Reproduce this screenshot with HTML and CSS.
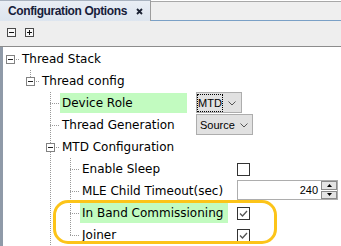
FILE: index.html
```html
<!DOCTYPE html>
<html>
<head>
<meta charset="utf-8">
<link rel="stylesheet" href="styles.css">
</head>
<body>
<div class="view">
  <div class="tabbar">
    <div class="tab">
      <span class="tab-title">Configuration Options</span>
      <svg class="tab-close" width="7" height="7" viewBox="0 0 7 7"><path d="M1 1L6 6M6 1L1 6" stroke="#1b2233" stroke-width="1.8"/></svg>
    </div>
    <div class="tab-rest"></div>
  </div>
  <div class="toolbar">
    <span class="tb-btn minus"></span>
    <span class="tb-btn plus"></span>
  </div>
  <div class="tree">
    <div class="row">
      <span class="c exp-root"><span class="box"></span></span>
      <span class="label">Thread Stack</span>
    </div>
    <div class="row">
      <span class="c"></span>
      <span class="c exp-last"><span class="box"></span></span>
      <span class="label">Thread config</span>
    </div>
    <div class="row g2">
      <div class="key">
        <span class="c"></span><span class="c"></span><span class="c tee"></span>
        <span class="label hl">Device Role</span>
      </div>
      <div class="select mtd"><span class="focus">MTD</span><svg class="chev" width="8" height="5" viewBox="0 0 8 5"><path d="M0.5 0.5L4 4L7.5 0.5" fill="none" stroke="#555" stroke-width="1"/></svg></div>
    </div>
    <div class="row g2">
      <div class="key">
        <span class="c"></span><span class="c"></span><span class="c tee"></span>
        <span class="label">Thread Generation</span>
      </div>
      <div class="select src"><span>Source</span><svg class="chev" width="8" height="5" viewBox="0 0 8 5"><path d="M0.5 0.5L4 4L7.5 0.5" fill="none" stroke="#555" stroke-width="1"/></svg></div>
    </div>
    <div class="row">
      <span class="c"></span><span class="c"></span>
      <span class="c exp-mid"><span class="box"></span></span>
      <span class="label">MTD Configuration</span>
    </div>
    <div class="row g3">
      <div class="key">
        <span class="c"></span><span class="c"></span><span class="c v"></span><span class="c tee"></span>
        <span class="label">Enable Sleep</span>
      </div>
      <span class="check"></span>
    </div>
    <div class="row g3">
      <div class="key">
        <span class="c"></span><span class="c"></span><span class="c v"></span><span class="c tee"></span>
        <span class="label">MLE Child Timeout(sec)</span>
      </div>
      <div class="spin">
        <span class="spin-val">240</span>
        <span class="spin-btns">
          <span class="spin-btn"><svg width="5" height="3" viewBox="0 0 5 3"><path d="M0 3L2.5 0L5 3Z" fill="#000"/></svg></span>
          <span class="spin-btn"><svg width="5" height="3" viewBox="0 0 5 3"><path d="M0 0L2.5 3L5 0Z" fill="#000"/></svg></span>
        </span>
      </div>
    </div>
    <div class="row g3">
      <div class="key">
        <span class="c"></span><span class="c"></span><span class="c v"></span><span class="c tee"></span>
        <span class="label hl">In Band Commissioning</span>
      </div>
      <span class="check"><svg width="11" height="11" viewBox="0 0 11 11"><path d="M2 5.5L4.5 8L9 3" fill="none" stroke="#555" stroke-width="1.3"/></svg></span>
    </div>
    <div class="row g3">
      <div class="key">
        <span class="c"></span><span class="c"></span><span class="c v"></span><span class="c end"></span>
        <span class="label">Joiner</span>
      </div>
      <span class="check"><svg width="11" height="11" viewBox="0 0 11 11"><path d="M2 5.5L4.5 8L9 3" fill="none" stroke="#555" stroke-width="1.3"/></svg></span>
    </div>
  </div>
  <div class="callout"></div>
</div>
</body>
</html>
```
FILE: styles.css
```css
html, body {
  margin: 0;
  padding: 0;
  background: #ffffff;
  overflow: hidden;
}
.view {
  position: relative;
  width: 341px;
  height: 246px;
  overflow: hidden;
  font-family: "DejaVu Sans", sans-serif;
  font-size: 12px;
  color: #000;
}
.tabbar {
  display: flex;
  height: 21px;
}
.tab {
  box-sizing: border-box;
  width: 151px;
  height: 21px;
  display: flex;
  align-items: center;
  padding-left: 8px;
  border-top: 1px solid #a9b3c0;
  border-right: 1px solid #9c9c9c;
  background: linear-gradient(#e9eef5, #dde5ef);
}
.tab-title {
  font-family: "Liberation Sans", Arial, sans-serif;
  font-weight: bold;
  font-size: 12px;
  letter-spacing: -0.4px;
  color: #17203a;
  line-height: 19px;
}
.tab-close {
  margin-left: 9px;
  margin-top: 1px;
}
.tab-rest {
  flex: 1;
  box-sizing: border-box;
  margin-top: 1px;
  height: 20px;
  background: #efefef;
  border-top: 1px solid #a8a8a8;
  border-bottom: 1px solid #7aa0c6;
}
.toolbar {
  box-sizing: border-box;
  height: 26px;
  background: #eeeeee;
  border-bottom: 1px solid #8c8c8c;
  display: flex;
  align-items: flex-start;
  gap: 9px;
  padding: 7px 0 0 7px;
}
.tb-btn {
  box-sizing: border-box;
  width: 9px;
  height: 9px;
  border: 1px solid #4a4a4a;
  background-color: #f8f8f8;
  background-repeat: no-repeat;
  background-position: center;
}
.tb-btn.minus {
  background-image: linear-gradient(#111, #111);
  background-size: 5px 1px;
}
.tb-btn.plus {
  background-image: linear-gradient(#111, #111), linear-gradient(#111, #111);
  background-size: 5px 1px, 1px 5px;
}
.tree {
  padding-top: 1px;
  height: 199px;
  background: linear-gradient(to right, #8f9aa8 0 3px, #ffffff 3px);
}
.row {
  display: flex;
  height: 22px;
}
.key {
  display: flex;
  flex: none;
  width: var(--col);
}
.row.g2 { --col: 196px; }
.row.g3 { --col: 237px; }
.c {
  flex: none;
  width: 20px;
  height: 22px;
  background-repeat: no-repeat;
}
.c.v {
  background-image: repeating-linear-gradient(to bottom, #999 0 1px, transparent 1px 2px);
  background-size: 1px 22px;
  background-position: 10px 0;
}
.c.tee, .c.exp-mid {
  background-image:
    repeating-linear-gradient(to bottom, #999 0 1px, transparent 1px 2px),
    repeating-linear-gradient(to right, #999 0 1px, transparent 1px 2px);
  background-size: 1px 22px, 10px 1px;
  background-position: 10px 0, 10px 11px;
}
.c.end, .c.exp-last {
  background-image:
    repeating-linear-gradient(to bottom, #999 0 1px, transparent 1px 2px),
    repeating-linear-gradient(to right, #999 0 1px, transparent 1px 2px);
  background-size: 1px 11px, 10px 1px;
  background-position: 10px 0, 10px 11px;
}
.c.exp-root {
  background-image: repeating-linear-gradient(to right, #999 0 1px, transparent 1px 2px);
  background-size: 10px 1px;
  background-position: 10px 11px;
}
.box {
  display: block;
  box-sizing: border-box;
  width: 9px;
  height: 9px;
  margin: 7px 0 0 6px;
  border: 1px solid #828282;
  background-color: #fff;
  background-image: linear-gradient(#222, #222);
  background-size: 5px 1px;
  background-position: center;
  background-repeat: no-repeat;
}
.label {
  white-space: nowrap;
  line-height: 20px;
  height: 20px;
  margin: 1px 0;
  padding-left: 2px;
}
.key .label {
  flex: 1;
  margin-right: 9px;
}
.label.hl {
  background: #c2fbc0;
}
.select {
  box-sizing: border-box;
  height: 21px;
  border: 1px solid #adadad;
  background: #e1e1e1;
  display: flex;
  align-items: center;
  justify-content: space-between;
  font-family: "Liberation Sans", Arial, sans-serif;
  font-size: 11px;
}
.select.mtd {
  width: 46px;
  padding: 0 5px 0 1px;
}
.select.src {
  width: 57px;
  padding: 0 4px 0 3px;
}
.focus {
  outline: 1px dotted #000;
  padding: 1px 0;
  line-height: 14px;
}
.chev {
  margin-top: 1px;
}
.check {
  box-sizing: border-box;
  width: 13px;
  height: 13px;
  margin-top: 5px;
  border: 1px solid #333;
  background: #fff;
  display: flex;
}
.spin {
  box-sizing: border-box;
  width: 101px;
  height: 20px;
  border: 1px solid #adadad;
  background: #fff;
  display: flex;
  font-family: "Liberation Sans", Arial, sans-serif;
  font-size: 11px;
}
.spin-val {
  flex: 1;
  text-align: right;
  padding-right: 3px;
  line-height: 19px;
}
.spin-btns {
  width: 16px;
  display: flex;
  flex-direction: column;
  gap: 1px;
}
.spin-btn {
  flex: 1;
  box-sizing: border-box;
  border: 1px solid #8a8a8a;
  background: #e4e4e4;
  display: flex;
  align-items: center;
  justify-content: center;
}
.callout {
  position: absolute;
  left: 53px;
  top: 200px;
  width: 224px;
  height: 44px;
  box-sizing: border-box;
  border: 3px solid #fcc419;
  border-radius: 15px;
}
```
